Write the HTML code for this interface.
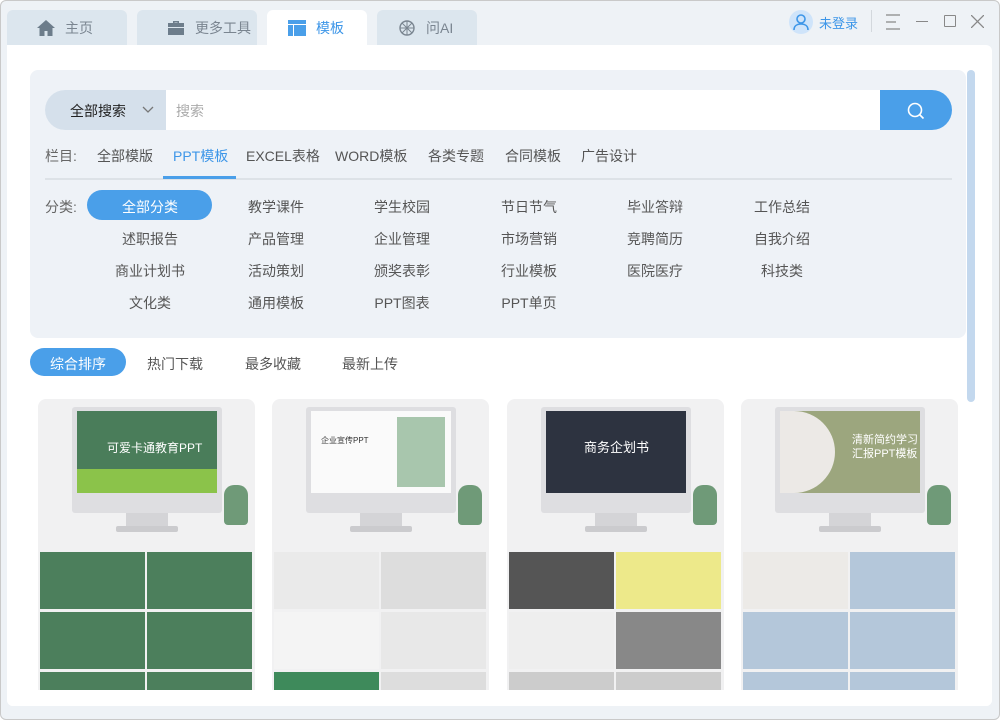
<!DOCTYPE html>
<html><head><meta charset="utf-8"><style>
*{margin:0;padding:0;box-sizing:border-box}
body{width:1000px;height:720px;overflow:hidden;background:#fff;font-family:"Liberation Sans","Noto Sans CJK SC",sans-serif;position:relative}
.win{position:absolute;left:0;top:0;width:1000px;height:720px;background:#eef2f6;border-radius:6px}
.bd{position:absolute;left:0;top:0;width:1000px;height:720px;border:1px solid #c9c9c9;border-radius:6px;pointer-events:none}
.tab{position:absolute;top:10px;height:36px;width:120px;background:#dce6ee;border-radius:6px 6px 0 0;font-size:14px;color:#7a8590;display:flex;align-items:center}
.tab svg{margin:0 10px 0 30px}
.main{position:absolute;left:7px;top:45px;width:985px;height:661px;background:#fff;border-radius:0 6px 6px 6px;overflow:hidden}
.a{position:absolute}
.panel{left:23px;top:25px;width:936px;height:268px;background:#eef2f7;border-radius:8px}
.t{position:absolute;font-size:14px;color:#555;white-space:nowrap}
.c{position:absolute;font-size:14px;color:#555;width:110px;text-align:center;white-space:nowrap}
.card{position:absolute;top:354px;width:217px;height:320px;background:#f1f1f2;border-radius:8px;overflow:hidden}
.mon{position:absolute;left:34px;top:8px;width:150px;height:106px;background:#dedee1;border-radius:3px}
.scr{position:absolute;left:5px;top:4px;width:140px;height:82px}
.stand{position:absolute;left:88px;top:114px;width:42px;height:14px;background:#d4d4d7}
.base{position:absolute;left:78px;top:127px;width:62px;height:6px;background:#cbcbce;border-radius:2px}
.pot{position:absolute;left:186px;top:86px;width:24px;height:40px}
.g{position:absolute;left:2px;top:153px;width:213px}
.g div{position:absolute;width:105px;height:57px}
</style></head><body>
<div class="win">
<div class="tab" style="left:7px"><svg width="18" height="16" viewBox="0 0 18 16"><path d="M9 0L0 8h2.5v8h5v-5h3v5h5V8H18z" fill="#6d7d8b"/></svg>主页</div>
<div class="tab" style="left:137px"><svg width="18" height="16" viewBox="0 0 18 16"><path d="M6 1h6v2h5v12H1V3h5zM7.5 2.5v0.5h3v-0.5z" fill="#6d7d8b"/><rect x="1" y="7" width="16" height="1" fill="#dce6ee"/></svg>更多工具</div>
<div class="tab" style="left:267px;width:100px;background:#fff;color:#3d96e8"><svg width="18" height="16" viewBox="0 0 18 16" style="margin-left:21px"><rect x="0" y="0" width="18" height="4" fill="#4a9fe9"/><rect x="0" y="5" width="5" height="11" fill="#4a9fe9"/><rect x="6" y="5" width="12" height="11" fill="#4a9fe9"/></svg>模板</div>
<div class="tab" style="left:377px;width:100px"><svg width="18" height="18" viewBox="0 0 18 18" style="margin-left:21px"><circle cx="9" cy="9" r="7" fill="none" stroke="#7a8590" stroke-width="1.4"/><path d="M9 2v14M2 9h14M4 4l10 10M14 4L4 14" stroke="#7a8590" stroke-width="1"/></svg>问AI</div>
<div class="a" style="left:789px;top:10px;width:24px;height:24px;border-radius:12px;background:#cfe4fa"></div>
<svg class="a" style="left:793px;top:13px" width="16" height="18" viewBox="0 0 16 18"><circle cx="8" cy="6" r="4" fill="none" stroke="#3d96e8" stroke-width="1.6"/><path d="M1 17c0-4 3-6 7-6s7 2 7 6" fill="none" stroke="#3d96e8" stroke-width="1.6"/></svg>
<div class="t" style="left:819px;top:13px;color:#3d96e8;font-size:13px">未登录</div>
<div class="a" style="left:871px;top:10px;width:1px;height:22px;background:#d3d8dd"></div>
<svg class="a" style="left:886px;top:14px" width="14" height="16"><path d="M0 1h14M0 8h10M0 15h14" stroke="#888" stroke-width="1.2"/></svg>
<div class="a" style="left:916px;top:21px;width:12px;height:1px;background:#888"></div>
<div class="a" style="left:944px;top:15px;width:12px;height:12px;border:1.3px solid #888;border-radius:1px"></div>
<svg class="a" style="left:971px;top:15px" width="13" height="13"><path d="M0 0L13 13M13 0L0 13" stroke="#888" stroke-width="1.3"/></svg>
<div class="main">
<div class="a panel"></div>
<div class="a" style="left:38px;top:45px;width:907px;height:40px;background:#fff;border-radius:20px;overflow:hidden">
 <div class="a" style="left:0;top:0;width:121px;height:40px;background:#d5e0eb"></div>
 <div class="t" style="left:25px;top:11px;color:#222">全部搜索</div>
 <svg class="a" style="left:97px;top:16px" width="12" height="8"><path d="M1 1l5 5 5-5" fill="none" stroke="#777" stroke-width="1.3"/></svg>
 <div class="t" style="left:131px;top:11px;color:#aaa">搜索</div>
 <div class="a" style="left:835px;top:0;width:72px;height:40px;background:#4a9fe9"></div>
 <svg class="a" style="left:862px;top:12px" width="18" height="18"><circle cx="8" cy="8" r="6.5" fill="none" stroke="#fff" stroke-width="1.6"/><path d="M12.5 12.5l4 4" stroke="#fff" stroke-width="1.6"/></svg>
</div>
<div class="t" style="left:38px;top:101px;color:#666">栏目:</div>
<div class="t" style="left:90px;top:101px">全部模版</div>
<div class="t" style="left:166px;top:101px;color:#3d96e8">PPT模板</div>
<div class="t" style="left:239px;top:101px">EXCEL表格</div>
<div class="t" style="left:328px;top:101px">WORD模板</div>
<div class="t" style="left:421px;top:101px">各类专题</div>
<div class="t" style="left:498px;top:101px">合同模板</div>
<div class="t" style="left:574px;top:101px">广告设计</div>
<div class="a" style="left:38px;top:133px;width:907px;height:2px;background:#dde2e7"></div>
<div class="a" style="left:156px;top:131px;width:73px;height:3px;background:#4a9fe9"></div>
<div class="t" style="left:38px;top:152px;color:#666">分类:</div>
<div class="a" style="left:80px;top:145px;width:125px;height:30px;border-radius:15px;background:#4a9fe9"></div>
<div class="c" style="left:88px;top:152px;color:#fff">全部分类</div>
<div class="c" style="left:214px;top:152px">教学课件</div><div class="c" style="left:340px;top:152px">学生校园</div><div class="c" style="left:467px;top:152px">节日节气</div><div class="c" style="left:593px;top:152px">毕业答辩</div><div class="c" style="left:720px;top:152px">工作总结</div>
<div class="c" style="left:88px;top:184px">述职报告</div><div class="c" style="left:214px;top:184px">产品管理</div><div class="c" style="left:340px;top:184px">企业管理</div><div class="c" style="left:467px;top:184px">市场营销</div><div class="c" style="left:593px;top:184px">竞聘简历</div><div class="c" style="left:720px;top:184px">自我介绍</div>
<div class="c" style="left:88px;top:216px">商业计划书</div><div class="c" style="left:214px;top:216px">活动策划</div><div class="c" style="left:340px;top:216px">颁奖表彰</div><div class="c" style="left:467px;top:216px">行业模板</div><div class="c" style="left:593px;top:216px">医院医疗</div><div class="c" style="left:720px;top:216px">科技类</div>
<div class="c" style="left:88px;top:248px">文化类</div><div class="c" style="left:214px;top:248px">通用模板</div><div class="c" style="left:340px;top:248px">PPT图表</div><div class="c" style="left:467px;top:248px">PPT单页</div>
<div class="a" style="left:960px;top:25px;width:8px;height:332px;background:#c3d8ee;border-radius:4px"></div>
<div class="a" style="left:23px;top:303px;width:96px;height:28px;border-radius:14px;background:#4a9fe9"></div>
<div class="t" style="left:43px;top:309px;color:#fff">综合排序</div>
<div class="t" style="left:140px;top:309px">热门下载</div>
<div class="t" style="left:238px;top:309px">最多收藏</div>
<div class="t" style="left:335px;top:309px">最新上传</div>

<div class="card" style="left:31px">
 <div class="mon"><div class="scr" style="background:#4a7d5a"><div class="t" style="left:30px;top:28px;color:#fff;font-size:12px">可爱卡通教育PPT</div><div class="a" style="left:0;top:58px;width:140px;height:24px;background:#8bc34a"></div></div></div>
 <div class="stand"></div><div class="base"></div><div class="pot" style="background:#6f9a78;border-radius:10px 10px 4px 4px"></div>
 <div class="g"><div style="left:0;top:0;background:#4c7f5c"></div><div style="left:107px;top:0;background:#4c7f5c"></div><div style="left:0;top:60px;background:#4c7f5c"></div><div style="left:107px;top:60px;background:#4c7f5c"></div><div style="left:0;top:120px;background:#4c7f5c"></div><div style="left:107px;top:120px;background:#4c7f5c"></div></div>
</div>
<div class="card" style="left:265px">
 <div class="mon"><div class="scr" style="background:#fafafa"><div class="t" style="left:10px;top:24px;color:#333;font-size:8px">企业宣传PPT</div><div class="a" style="left:86px;top:6px;width:48px;height:70px;background:#a8c6ad"></div></div></div>
 <div class="stand"></div><div class="base"></div><div class="pot" style="background:#6f9a78;border-radius:10px 10px 4px 4px"></div>
 <div class="g"><div style="left:0;top:0;background:#eaeaea"></div><div style="left:107px;top:0;background:#ddd"></div><div style="left:0;top:60px;background:#f4f4f4"></div><div style="left:107px;top:60px;background:#e8e8e8"></div><div style="left:0;top:120px;background:#3e8a5b"></div><div style="left:107px;top:120px;background:#ddd"></div></div>
</div>
<div class="card" style="left:500px">
 <div class="mon"><div class="scr" style="background:#2d3340"><div class="t" style="left:38px;top:26px;color:#fff;font-size:13px">商务企划书</div></div></div>
 <div class="stand"></div><div class="base"></div><div class="pot" style="background:#6f9a78;border-radius:10px 10px 4px 4px"></div>
 <div class="g"><div style="left:0;top:0;background:#555"></div><div style="left:107px;top:0;background:#ede98a"></div><div style="left:0;top:60px;background:#eee"></div><div style="left:107px;top:60px;background:#888"></div><div style="left:0;top:120px;background:#ccc"></div><div style="left:107px;top:120px;background:#ccc"></div></div>
</div>
<div class="card" style="left:734px">
 <div class="mon"><div class="scr" style="background:#9ca67e"><div class="a" style="left:0;top:0;width:55px;height:82px;background:#ece9e6;border-radius:0 41px 41px 0"></div><div class="t" style="left:72px;top:22px;color:#fff;font-size:11px;line-height:14px">清新简约学习<br>汇报PPT模板</div></div></div>
 <div class="stand"></div><div class="base"></div><div class="pot" style="background:#6f9a78;border-radius:10px 10px 4px 4px"></div>
 <div class="g"><div style="left:0;top:0;background:#eceae7"></div><div style="left:107px;top:0;background:#b4c7da"></div><div style="left:0;top:60px;background:#b4c7da"></div><div style="left:107px;top:60px;background:#b4c7da"></div><div style="left:0;top:120px;background:#b4c7da"></div><div style="left:107px;top:120px;background:#b4c7da"></div></div>
</div>
<div class="a" style="left:0;top:645px;width:985px;height:16px;background:#fff"></div>
</div>
</div>
<div class="bd"></div>
</body></html>
